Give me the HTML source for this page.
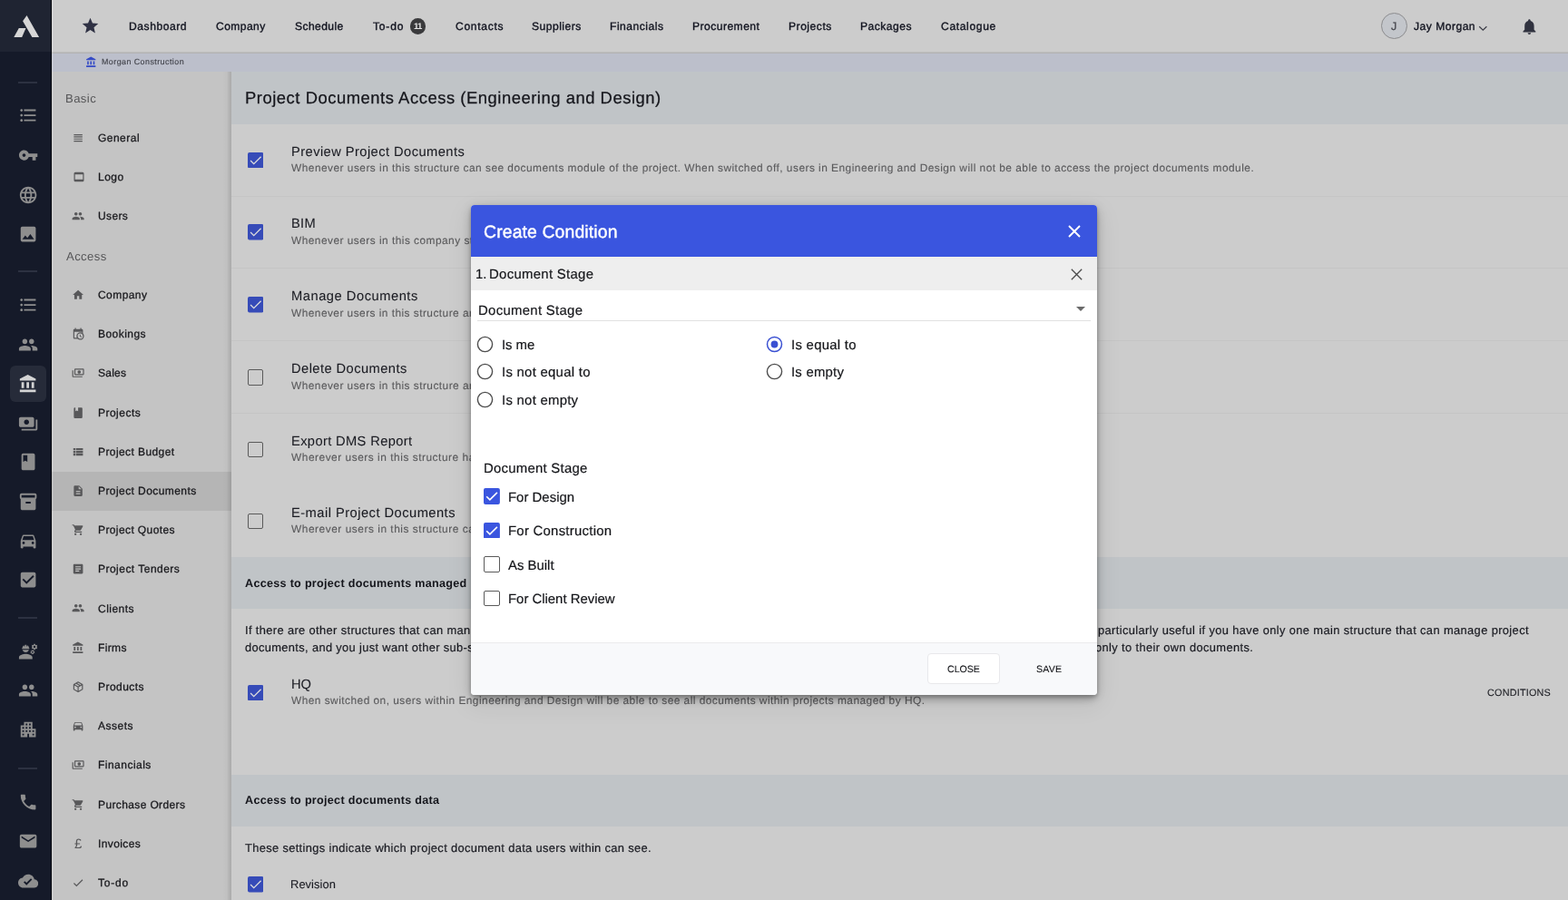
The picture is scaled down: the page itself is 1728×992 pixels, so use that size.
<!DOCTYPE html>
<html lang="en">
<head>
<meta charset="utf-8">
<title>Project Documents Access - Create Condition</title>
<style>
*{margin:0;padding:0}
html,body{width:1728px;height:992px;overflow:hidden;background:#cccccc;font-family:"Liberation Sans", sans-serif}
#app{position:absolute;left:0;top:0;width:1728px;height:992px;overflow:hidden}
.g{position:absolute;left:0;top:0;width:0;height:0}
.b,.ic,.t{position:absolute;display:block}
.t{will-change:transform;text-rendering:geometricPrecision;white-space:nowrap;line-height:20px;font-weight:400;font-style:normal;text-decoration:none}
</style>
</head>
<body>
<div id="app">
<aside class="g rail">
<div class="b" style="left:0px;top:0px;width:57px;height:992px;background:#151a29"></div>
<div class="b" style="left:0px;top:0px;width:56px;height:57px;background:#1f2432"></div>
<div class="b" style="left:56px;top:0px;width:1px;height:992px;background:#04060c"></div>
<svg class="ic" style="left:0;top:0;width:57px;height:57px" viewBox="0 0 57 57"><path fill="#d6d6d6" d="M29.5 17 L43.1 41 H35.4 L25.1 23.3 Z M20.8 30.9 H28.5 L24.2 41 H15.3 Z"/></svg>
<div class="b" style="left:11px;top:403px;width:40px;height:40px;background:#262b39;border-radius:6px"></div>
<svg class="ic" style="left:19.90px;top:116.40px;width:22.2px;height:22.2px" viewBox="0 0 24 24" aria-hidden="true"><path fill="#8e8e8e" d="M4 10.5c-.83 0-1.5.67-1.5 1.5s.67 1.5 1.5 1.5 1.5-.67 1.5-1.5-.67-1.5-1.5-1.5zm0-6c-.83 0-1.5.67-1.5 1.5S3.17 7.5 4 7.5 5.5 6.83 5.5 6 4.83 4.500 4 4.500zm0 12c-.83 0-1.5.68-1.5 1.5s.68 1.5 1.5 1.5 1.5-.68 1.5-1.5-.67-1.5-1.5-1.5zM7 19h14v-2H7v2zm0-6h14v-2H7v2zm0-8v2h14V5H7z"/></svg>
<svg class="ic" style="left:19.90px;top:159.90px;width:22.2px;height:22.2px" viewBox="0 0 24 24" aria-hidden="true"><path fill="#8e8e8e" d="M12.65 10C11.83 7.67 9.61 6 7 6c-3.31 0-6 2.69-6 6s2.69 6 6 6c2.61 0 4.83-1.67 5.65-4H17v4h4v-4h2v-4H12.65zM7 14c-1.1 0-2-.9-2-2s.9-2 2-2 2 .9 2 2-.9 2-2 2z"/></svg>
<svg class="ic" style="left:19.90px;top:203.50px;width:22.2px;height:22.2px" viewBox="0 0 24 24" aria-hidden="true"><path fill="#8e8e8e" d="M11.99 2C6.47 2 2 6.48 2 12s4.47 10 9.99 10C17.52 22 22 17.52 22 12S17.52 2 11.99 2zm6.93 6h-2.95c-.32-1.25-.78-2.45-1.38-3.56 1.84.63 3.37 1.91 4.33 3.56zM12 4.040c.83 1.2 1.48 2.53 1.91 3.96h-3.82c.43-1.43 1.08-2.76 1.91-3.96zM4.260 14C4.100 13.360 4 12.690 4 12s.1-1.36.26-2h3.380c-.08.66-.14 1.32-.14 2 0 .68.06 1.340.14 2H4.260zm.82 2h2.950c.32 1.250.78 2.450 1.380 3.560-1.840-.630-3.370-1.900-4.330-3.560zm2.950-8H5.080c.96-1.660 2.490-2.930 4.330-3.560C8.810 5.550 8.350 6.750 8.030 8zM12 19.960c-.83-1.200-1.480-2.530-1.910-3.960h3.820c-.43 1.430-1.080 2.760-1.910 3.960zM14.340 14H9.660c-.09-.66-.16-1.320-.16-2 0-.68.07-1.350.16-2h4.680c.09.65.16 1.320.16 2 0 .68-.07 1.340-.16 2zm.25 5.560c.6-1.110 1.060-2.310 1.380-3.560h2.950c-.96 1.650-2.490 2.930-4.330 3.560zM16.360 14c.08-.66.14-1.320.14-2 0-.68-.06-1.340-.14-2h3.380c.16.64.26 1.310.26 2s-.1 1.360-.26 2h-3.380z"/></svg>
<svg class="ic" style="left:19.90px;top:246.50px;width:22.2px;height:22.2px" viewBox="0 0 24 24" aria-hidden="true"><path fill="#8e8e8e" d="M21 19V5c0-1.100-.9-2-2-2H5c-1.100 0-2 .9-2 2v14c0 1.100.9 2 2 2h14c1.100 0 2-.9 2-2zM8.500 13.500l2.500 3.010L14.500 12l4.500 6H5l3.500-4.500z"/></svg>
<svg class="ic" style="left:19.90px;top:325.10px;width:22.2px;height:22.2px" viewBox="0 0 24 24" aria-hidden="true"><path fill="#8e8e8e" d="M4 10.5c-.83 0-1.5.67-1.5 1.5s.67 1.5 1.5 1.5 1.5-.67 1.5-1.5-.67-1.5-1.5-1.5zm0-6c-.83 0-1.5.67-1.5 1.5S3.17 7.5 4 7.5 5.5 6.83 5.5 6 4.83 4.500 4 4.500zm0 12c-.83 0-1.5.68-1.5 1.5s.68 1.5 1.5 1.5 1.5-.68 1.5-1.5-.67-1.5-1.5-1.5zM7 19h14v-2H7v2zm0-6h14v-2H7v2zm0-8v2h14V5H7z"/></svg>
<svg class="ic" style="left:19.90px;top:368.90px;width:22.2px;height:22.2px" viewBox="0 0 24 24" aria-hidden="true"><path fill="#8e8e8e" d="M16 11c1.660 0 2.990-1.340 2.990-3S17.660 5 16 5c-1.660 0-3 1.340-3 3s1.340 3 3 3zm-8 0c1.660 0 2.990-1.340 2.990-3S9.660 5 8 5C6.340 5 5 6.340 5 8s1.340 3 3 3zm0 2c-2.330 0-7 1.170-7 3.500V19h14v-2.500c0-2.330-4.670-3.500-7-3.500zm8 0c-.29 0-.62.02-.97.05 1.160.84 1.970 1.970 1.970 3.450V19h6v-2.500c0-2.330-4.670-3.500-7-3.500z"/></svg>
<svg class="ic" style="left:19.90px;top:412.10px;width:22.2px;height:22.2px" viewBox="0 0 24 24" aria-hidden="true"><path fill="#d4d4d4" d="M4 10v7h3v-7H4zm6 0v7h3v-7h-3zM2 22h19v-3H2v3zm14-12v7h3v-7h-3zm-4.500-9L2 6v2h19V6l-9.500-5z"/></svg>
<svg class="ic" style="left:19.90px;top:455.90px;width:22.2px;height:22.2px" viewBox="0 0 24 24" aria-hidden="true"><path fill="#8e8e8e" d="M19 14V6c0-1.100-.9-2-2-2H3c-1.100 0-2 .9-2 2v8c0 1.100.9 2 2 2h14c1.100 0 2-.9 2-2zm-9-1c-1.660 0-3-1.340-3-3s1.340-3 3-3 3 1.340 3 3-1.340 3-3 3zm13-6v11c0 1.100-.9 2-2 2H4v-2h17V7h2z"/></svg>
<svg class="ic" style="left:19.90px;top:498.30px;width:22.2px;height:22.2px" viewBox="0 0 24 24" aria-hidden="true"><path fill="#8e8e8e" d="M18 2H6c-1.100 0-2 .9-2 2v16c0 1.100.9 2 2 2h12c1.100 0 2-.9 2-2V4c0-1.100-.9-2-2-2zM6 4h5v8l-2.500-1.500L6 12V4z"/></svg>
<svg class="ic" style="left:19.90px;top:541.50px;width:22.2px;height:22.2px" viewBox="0 0 24 24" aria-hidden="true"><path fill="#8e8e8e" d="M20 2H4c-1 0-2 .9-2 2v3.010c0 .72.43 1.340 1 1.690V20c0 1.100 1.100 2 2 2h14c.9 0 2-.9 2-2V8.700c.57-.35 1-.97 1-1.690V4c0-1.100-1-2-2-2zm-5 12H9v-2h6v2zm5-7H4V4h16v3z"/></svg>
<svg class="ic" style="left:19.90px;top:585.00px;width:22.2px;height:22.2px" viewBox="0 0 24 24" aria-hidden="true"><path fill="#8e8e8e" d="M18.920 6.010C18.720 5.420 18.160 5 17.500 5h-11c-.66 0-1.210.42-1.420 1.010L3 12v8c0 .55.45 1 1 1h1c.55 0 1-.45 1-1v-1h12v1c0 .55.45 1 1 1h1c.55 0 1-.45 1-1v-8l-2.080-5.990zM6.500 16c-.83 0-1.500-.67-1.500-1.500S5.670 13 6.500 13s1.500.67 1.500 1.500S7.330 16 6.500 16zm11 0c-.83 0-1.500-.67-1.500-1.500s.67-1.500 1.500-1.500 1.500.67 1.500 1.500-.67 1.500-1.500 1.500zM5 11l1.500-4.500h11L19 11H5z"/></svg>
<svg class="ic" style="left:19.90px;top:627.80px;width:22.2px;height:22.2px" viewBox="0 0 24 24" aria-hidden="true"><path fill="#8e8e8e" d="M19 3H5c-1.110 0-2 .9-2 2v14c0 1.100.89 2 2 2h14c1.110 0 2-.9 2-2V5c0-1.100-.89-2-2-2zm-9 14l-5-5 1.410-1.410L10 14.170l7.590-7.590L19 8l-9 9z"/></svg>
<svg class="ic" style="left:19.90px;top:706.90px;width:22.2px;height:22.2px" viewBox="0 0 24 24" aria-hidden="true"><path fill="#8e8e8e" d="M9 15c-2.670 0-8 1.340-8 4v2h16v-2c0-2.660-5.330-4-8-4zM22.100 6.840c.01-.11.02-.22.02-.34 0-.12-.01-.23-.03-.34l.74-.58c.07-.05.08-.15.04-.22l-.7-1.210c-.04-.08-.14-.1-.21-.08l-.86.35c-.18-.14-.38-.25-.59-.34l-.13-.93c-.02-.09-.09-.15-.18-.15h-1.400c-.09 0-.16.06-.17.15l-.13.93c-.21.09-.41.21-.59.34l-.87-.35c-.08-.03-.17 0-.21.08l-.7 1.210c-.04.08-.03.17.04.22l.74.58c-.02.11-.03.23-.03.34 0 .11.01.23.03.34l-.74.58c-.07.05-.08.15-.04.22l.7 1.210c.04.08.14.1.21.08l.87-.35c.18.14.38.25.59.34l.13.93c.01.09.08.15.17.15h1.400c.09 0 .16-.06.17-.15l.13-.93c.21-.09.41-.21.59-.34l.87.35c.08.03.17 0 .21-.08l.7-1.210c.04-.08.03-.17-.04-.22l-.73-.58zm-2.600.91c-.69 0-1.250-.56-1.250-1.250s.56-1.250 1.250-1.250 1.250.56 1.250 1.250-.56 1.250-1.250 1.250zM4.740 9h8.530c.27 0 .49-.22.49-.49v-.02c0-.27-.22-.49-.49-.49H13c0-1.480-.81-2.750-2-3.450v.95c0 .28-.22.5-.5.5s-.5-.22-.5-.5V4.140C9.680 4.060 9.350 4 9 4s-.68.06-1 .14V5.500c0 .28-.22.5-.5.5S7 5.780 7 5.500v-.95C5.810 5.250 5 6.520 5 8h-.26c-.27 0-.49.22-.49.49v.030c0 .26.22.48.49.48zM9 13c1.860 0 3.410-1.280 3.860-3H5.140c.45 1.720 2 3 3.860 3z"/><path fill="#8e8e8e" fill-rule="evenodd" d="M19.83 13.29 L19.48 14.15 L18.82 13.88 L18.38 14.32 L18.65 14.98 L17.79 15.33 L17.51 14.68 L16.89 14.68 L16.61 15.33 L15.75 14.98 L16.02 14.32 L15.58 13.88 L14.92 14.15 L14.57 13.29 L15.22 13.01 L15.22 12.39 L14.57 12.11 L14.92 11.25 L15.58 11.52 L16.02 11.08 L15.75 10.42 L16.61 10.07 L16.89 10.72 L17.51 10.72 L17.79 10.07 L18.65 10.42 L18.38 11.08 L18.82 11.52 L19.48 11.25 L19.83 12.11 L19.18 12.39 L19.18 13.01Z M16.25 12.70a0.95 0.95 0 1 0 1.9 0a0.95 0.95 0 1 0 -1.9 0Z"/></svg>
<svg class="ic" style="left:19.90px;top:750.10px;width:22.2px;height:22.2px" viewBox="0 0 24 24" aria-hidden="true"><path fill="#8e8e8e" d="M16 11c1.660 0 2.990-1.340 2.990-3S17.660 5 16 5c-1.660 0-3 1.340-3 3s1.340 3 3 3zm-8 0c1.660 0 2.990-1.340 2.990-3S9.660 5 8 5C6.340 5 5 6.340 5 8s1.340 3 3 3zm0 2c-2.330 0-7 1.170-7 3.500V19h14v-2.500c0-2.330-4.670-3.500-7-3.500zm8 0c-.29 0-.62.02-.97.05 1.160.84 1.970 1.970 1.970 3.450V19h6v-2.500c0-2.330-4.670-3.500-7-3.500z"/></svg>
<svg class="ic" style="left:19.90px;top:793.40px;width:22.2px;height:22.2px" viewBox="0 0 24 24" aria-hidden="true"><path fill="#8e8e8e" d="M17 11V3H7v4H3v14h8v-4h2v4h8V11h-4zM7 19H5v-2h2v2zm0-4H5v-2h2v2zm0-4H5V9h2v2zm4 4H9v-2h2v2zm0-4H9V9h2v2zm0-4H9V5h2v2zm4 8h-2v-2h2v2zm0-4h-2V9h2v2zm0-4h-2V5h2v2zm4 12h-2v-2h2v2zm0-4h-2v-2h2v2z"/></svg>
<svg class="ic" style="left:19.90px;top:872.90px;width:22.2px;height:22.2px" viewBox="0 0 24 24" aria-hidden="true"><path fill="#8e8e8e" d="M6.620 10.790c1.440 2.830 3.760 5.140 6.590 6.590l2.200-2.200c.27-.27.67-.36 1.020-.24 1.120.37 2.330.57 3.570.57.55 0 1 .45 1 1V20c0 .55-.45 1-1 1-9.390 0-17-7.610-17-17 0-.55.45-1 1-1h3.500c.55 0 1 .45 1 1 0 1.250.2 2.450.57 3.570.11.35.03.74-.25 1.020l-2.200 2.200z"/></svg>
<svg class="ic" style="left:19.90px;top:915.80px;width:22.2px;height:22.2px" viewBox="0 0 24 24" aria-hidden="true"><path fill="#8e8e8e" d="M20 4H4c-1.100 0-1.990.9-1.990 2L2 18c0 1.100.9 2 2 2h16c1.100 0 2-.9 2-2V6c0-1.100-.9-2-2-2zm0 4l-8 5-8-5V6l8 5 8-5v2z"/></svg>
<svg class="ic" style="left:19.90px;top:959.50px;width:22.2px;height:22.2px" viewBox="0 0 24 24" aria-hidden="true"><path fill="#8e8e8e" d="M19.350 10.040C18.670 6.590 15.640 4 12 4 9.110 4 6.600 5.640 5.350 8.040 2.340 8.360 0 10.910 0 14c0 3.310 2.690 6 6 6h13c2.760 0 5-2.240 5-5 0-2.640-2.050-4.780-4.650-4.960zM10 17l-3.500-3.500 1.410-1.410L10 14.170 15.180 9l1.410 1.410L10 17z"/></svg>
<div class="b" style="left:20px;top:90px;width:21px;height:2px;background:#2c3141"></div>
<div class="b" style="left:20px;top:298px;width:21px;height:2px;background:#2c3141"></div>
<div class="b" style="left:20px;top:680px;width:21px;height:2px;background:#2c3141"></div>
<div class="b" style="left:20px;top:846px;width:21px;height:2px;background:#2c3141"></div>
</aside>
<header class="g topnav">
<div class="b" style="left:57px;top:0px;width:1671px;height:58px;background:#cccccc"></div>
<div class="b" style="left:57px;top:57px;width:1671px;height:1px;background:#bdbdbd"></div>
<div class="b" style="left:57px;top:58px;width:1671px;height:1px;background:#b3b3b3"></div>
<svg class="ic" style="left:89.10px;top:18.40px;width:21px;height:21px" viewBox="0 0 24 24" aria-hidden="true"><path fill="#2f3144" d="M12 17.270L18.180 21l-1.640-7.030L22 9.240l-7.190-.61L12 2 9.190 8.630 2 9.240l5.460 4.730L5.820 21z"/></svg>
<nav>
<a class="t" style="left:141.75px;top:19px;font-size:12.1px;color:#11131f;letter-spacing:0.554px;-webkit-text-stroke:0.35px #11131f">Dashboard</a>
<a class="t" style="left:237.68px;top:19px;font-size:12.1px;color:#11131f;letter-spacing:0.422px;-webkit-text-stroke:0.35px #11131f">Company</a>
<a class="t" style="left:324.87px;top:19px;font-size:12.1px;color:#11131f;letter-spacing:0.416px;-webkit-text-stroke:0.35px #11131f">Schedule</a>
<a class="t" style="left:410.81px;top:19px;font-size:12.1px;color:#11131f;letter-spacing:0.790px;-webkit-text-stroke:0.35px #11131f">To-do</a>
<a class="t" style="left:501.68px;top:19px;font-size:12.1px;color:#11131f;letter-spacing:0.706px;-webkit-text-stroke:0.35px #11131f">Contacts</a>
<a class="t" style="left:586.37px;top:19px;font-size:12.1px;color:#11131f;letter-spacing:0.477px;-webkit-text-stroke:0.35px #11131f">Suppliers</a>
<a class="t" style="left:672.30px;top:19px;font-size:12.1px;color:#11131f;letter-spacing:0.511px;-webkit-text-stroke:0.35px #11131f">Financials</a>
<a class="t" style="left:763.05px;top:19px;font-size:12.1px;color:#11131f;letter-spacing:0.464px;-webkit-text-stroke:0.35px #11131f">Procurement</a>
<a class="t" style="left:868.80px;top:19px;font-size:12.1px;color:#11131f;letter-spacing:0.516px;-webkit-text-stroke:0.35px #11131f">Projects</a>
<a class="t" style="left:948.05px;top:19px;font-size:12.1px;color:#11131f;letter-spacing:0.491px;-webkit-text-stroke:0.35px #11131f">Packages</a>
<a class="t" style="left:1036.68px;top:19px;font-size:12.1px;color:#11131f;letter-spacing:0.643px;-webkit-text-stroke:0.35px #11131f">Catalogue</a>
<div class="b" style="left:451.5px;top:20px;width:17.6px;height:17.6px;background:#3a3a3c;border-radius:50%"></div>
<span class="t" style="left:455.70px;top:20px;font-size:9.6px;color:#e4e4e4;letter-spacing:-0.909px;font-weight:700">11</span>
</nav>
<div class="b" style="left:1521.8px;top:14.2px;width:29px;height:29px;background:#c3c6cb;border:1px solid #8c8c8e;border-radius:50%;box-sizing:border-box"></div>
<span class="t" style="left:1533.11px;top:19px;font-size:12.4px;color:#4a4b52;-webkit-text-stroke:0.3px #4a4b52">J</span>
<span class="t" style="left:1558.06px;top:19px;font-size:12.1px;color:#11131f;letter-spacing:0.489px;-webkit-text-stroke:0.35px #11131f">Jay Morgan</span>
<svg class="ic" style="left:1628.8px;top:27.7px;width:11px;height:7px" viewBox="0 0 11 7"><path d="M1.2 1.2 L5.3 5.2 L9.4 1.2" fill="none" stroke="#3a3c46" stroke-width="1.2"/></svg>
<svg class="ic" style="left:1675.40px;top:18.60px;width:20.8px;height:20.8px" viewBox="0 0 24 24" aria-hidden="true"><path fill="#30323f" d="M12 22c1.100 0 2-.9 2-2h-4c0 1.100.89 2 2 2zm6-6v-5c0-3.070-1.640-5.640-4.500-6.320V4c0-.83-.67-1.500-1.500-1.500s-1.500.67-1.500 1.500v.68C7.630 5.360 6 7.920 6 11v5l-2 2v1h16v-1l-2-2z"/></svg>
</header>
<div class="g crumb">
<div class="b" style="left:57px;top:59px;width:1671px;height:20px;background:#bcbfcb"></div>
<svg class="ic" style="left:94.30px;top:61.60px;width:13.0px;height:13.0px" viewBox="0 0 24 24" aria-hidden="true"><path fill="#344ac6" d="M4 10v7h3v-7H4zm6 0v7h3v-7h-3zM2 22h19v-3H2v3zm14-12v7h3v-7h-3zm-4.500-9L2 6v2h19V6l-9.500-5z"/></svg>
<span class="t" style="left:111.70px;top:58px;font-size:8.9px;color:#43444c;letter-spacing:0.455px;-webkit-text-stroke:0.15px #43444c">Morgan Construction</span>
</div>
<nav class="g side">
<div class="b" style="left:57px;top:79px;width:198px;height:913px;background:#c4c4c4"></div>
<div class="b" style="left:57px;top:520px;width:198px;height:43px;background:#b5b5b5"></div>
<span class="t" style="left:71.98px;top:99px;font-size:13.1px;color:#555557;letter-spacing:0.424px">Basic</span>
<span class="t" style="left:72.50px;top:273px;font-size:13.1px;color:#555557;letter-spacing:0.397px">Access</span>
<svg class="ic" style="left:79.40px;top:144.90px;width:14.2px;height:14.2px" viewBox="0 0 24 24" aria-hidden="true"><path fill="#58585a" d="M4 15h16v-2H4v2zm0 4h16v-2H4v2zm0-8h16V9H4v2zm0-6v2h16V5H4z"/></svg>
<a class="t" style="left:108.04px;top:142px;font-size:12.0px;color:#19191d;letter-spacing:0.477px;-webkit-text-stroke:0.3px #19191d">General</a>
<svg class="ic" style="left:80.5px;top:189.2px;width:12px;height:12px" viewBox="0 0 12 12"><path fill="#58585a" fill-rule="evenodd" d="M2 .7h8a1.5 1.5 0 0 1 1.5 1.5v7.6a1.500 1.500 0 0 1-1.500 1.500h-8a1.500 1.500 0 0 1-1.500-1.500v-7.600a1.500 1.500 0 0 1 1.500-1.500zM1.700 3.300v5.400h8.600v-5.400z"/></svg>
<a class="t" style="left:107.66px;top:185px;font-size:12.0px;color:#19191d;letter-spacing:0.510px;-webkit-text-stroke:0.3px #19191d">Logo</a>
<svg class="ic" style="left:79.40px;top:230.80px;width:14.2px;height:14.2px" viewBox="0 0 24 24" aria-hidden="true"><path fill="#58585a" d="M16 11c1.660 0 2.990-1.340 2.990-3S17.660 5 16 5c-1.660 0-3 1.340-3 3s1.340 3 3 3zm-8 0c1.660 0 2.990-1.340 2.990-3S9.660 5 8 5C6.340 5 5 6.340 5 8s1.340 3 3 3zm0 2c-2.330 0-7 1.170-7 3.500V19h14v-2.500c0-2.330-4.670-3.500-7-3.500zm8 0c-.29 0-.62.02-.97.05 1.160.84 1.970 1.970 1.970 3.450V19h6v-2.500c0-2.330-4.670-3.500-7-3.500z"/></svg>
<a class="t" style="left:107.85px;top:228px;font-size:12.0px;color:#19191d;letter-spacing:0.372px;-webkit-text-stroke:0.3px #19191d">Users</a>
<svg class="ic" style="left:79.40px;top:317.90px;width:14.2px;height:14.2px" viewBox="0 0 24 24" aria-hidden="true"><path fill="#58585a" d="M10 20v-6h4v6h5v-8h3L12 3 2 12h3v8z"/></svg>
<a class="t" style="left:108.04px;top:315px;font-size:12.0px;color:#19191d;letter-spacing:0.434px;-webkit-text-stroke:0.3px #19191d">Company</a>
<svg class="ic" style="left:79.40px;top:361.10px;width:14.2px;height:14.2px" viewBox="0 0 24 24" aria-hidden="true"><path fill="#58585a" d="M15 13h1.500v2.820l2.440 1.410-.75 1.300L15 16.690V13m4-5H5v11h4.670c-.43-.91-.67-1.930-.67-3a7 7 0 0 1 7-7c1.070 0 2.090.24 3 .67V8M5 21a2 2 0 0 1-2-2V5c0-1.110.89-2 2-2h1V1h2v2h8V1h2v2h1a2 2 0 0 1 2 2v6.100c1.240 1.260 2 2.990 2 4.900a7 7 0 0 1-7 7c-1.910 0-3.640-.76-4.900-2H5m11-9.850A4.850 4.850 0 0 0 11.150 16c0 2.680 2.170 4.850 4.850 4.850A4.850 4.850 0 0 0 20.850 16c0-2.680-2.170-4.850-4.850-4.850z"/></svg>
<a class="t" style="left:107.66px;top:358px;font-size:12.0px;color:#19191d;letter-spacing:0.464px;-webkit-text-stroke:0.3px #19191d">Bookings</a>
<svg class="ic" style="left:79.40px;top:404.30px;width:14.2px;height:14.2px" viewBox="0 0 24 24" aria-hidden="true"><path fill="#58585a" transform="translate(24 0) scale(-1 1)" d="M19 14V6c0-1.100-.9-2-2-2H3c-1.100 0-2 .9-2 2v8c0 1.100.9 2 2 2h14c1.100 0 2-.9 2-2zm-2 0H3V6h14v8zm-7-7c-1.660 0-3 1.340-3 3s1.340 3 3 3 3-1.340 3-3-1.340-3-3-3zm13 0v11c0 1.100-.9 2-2 2H4v-2h17V7h2z"/></svg>
<a class="t" style="left:108.22px;top:401px;font-size:12.0px;color:#19191d;letter-spacing:0.258px;-webkit-text-stroke:0.3px #19191d">Sales</a>
<svg class="ic" style="left:79.40px;top:447.50px;width:14.2px;height:14.2px" viewBox="0 0 24 24" aria-hidden="true"><path fill="#58585a" d="M18 22a2 2 0 0 0 2-2V4c0-1.110-.9-2-2-2h-6v7L9.500 7.500 7 9V2H6a2 2 0 0 0-2 2v16a2 2 0 0 0 2 2h12z"/></svg>
<a class="t" style="left:107.66px;top:445px;font-size:12.0px;color:#19191d;letter-spacing:0.481px;-webkit-text-stroke:0.3px #19191d">Projects</a>
<svg class="ic" style="left:79.40px;top:490.70px;width:14.2px;height:14.2px" viewBox="0 0 24 24" aria-hidden="true"><path fill="#58585a" d="M3 14h4v-4H3v4zm0 5h4v-4H3v4zM3 9h4V5H3v4zm5 5h13v-4H8v4zm0 5h13v-4H8v4zM8 5v4h13V5H8z"/></svg>
<a class="t" style="left:107.66px;top:488px;font-size:12.0px;color:#19191d;letter-spacing:0.414px;-webkit-text-stroke:0.3px #19191d">Project Budget</a>
<svg class="ic" style="left:79.40px;top:533.90px;width:14.2px;height:14.2px" viewBox="0 0 24 24" aria-hidden="true"><path fill="#58585a" d="M14 2H6c-1.100 0-1.990.9-1.990 2L4 20c0 1.100.89 2 1.990 2H18c1.100 0 2-.9 2-2V8l-6-6zm2 16H8v-2h8v2zm0-4H8v-2h8v2zm-3-5V3.500L18.500 9H13z"/></svg>
<a class="t" style="left:107.66px;top:531px;font-size:12.0px;color:#19191d;letter-spacing:0.427px;-webkit-text-stroke:0.3px #19191d">Project Documents</a>
<svg class="ic" style="left:79.40px;top:577.10px;width:14.2px;height:14.2px" viewBox="0 0 24 24" aria-hidden="true"><path fill="#58585a" d="M7 18c-1.100 0-1.990.9-1.990 2S5.900 22 7 22s2-.9 2-2-.9-2-2-2zM1 2v2h2l3.600 7.590-1.350 2.450c-.16.28-.25.61-.25.96 0 1.100.9 2 2 2h12v-2H7.420c-.14 0-.25-.11-.25-.25l.03-.12.9-1.630h7.450c.75 0 1.410-.41 1.750-1.030l3.580-6.490c.08-.14.12-.31.12-.48 0-.55-.45-1-1-1H5.210l-.94-2H1zm16 16c-1.100 0-1.990.9-1.990 2s.89 2 1.990 2 2-.9 2-2-.9-2-2-2z"/></svg>
<a class="t" style="left:107.66px;top:574px;font-size:12.0px;color:#19191d;letter-spacing:0.395px;-webkit-text-stroke:0.3px #19191d">Project Quotes</a>
<svg class="ic" style="left:79.40px;top:620.30px;width:14.2px;height:14.2px" viewBox="0 0 24 24" aria-hidden="true"><path fill="#58585a" d="M19 3H5c-1.100 0-2 .9-2 2v14c0 1.100.9 2 2 2h14c1.100 0 2-.9 2-2V5c0-1.100-.9-2-2-2zm-5 14H7v-2h7v2zm3-4H7v-2h10v2zm0-4H7V7h10v2z"/></svg>
<a class="t" style="left:107.66px;top:617px;font-size:12.0px;color:#19191d;letter-spacing:0.474px;-webkit-text-stroke:0.3px #19191d">Project Tenders</a>
<svg class="ic" style="left:79.40px;top:663.10px;width:14.2px;height:14.2px" viewBox="0 0 24 24" aria-hidden="true"><path fill="#58585a" d="M16 11c1.660 0 2.990-1.340 2.990-3S17.660 5 16 5c-1.660 0-3 1.340-3 3s1.340 3 3 3zm-8 0c1.660 0 2.990-1.340 2.990-3S9.660 5 8 5C6.340 5 5 6.340 5 8s1.340 3 3 3zm0 2c-2.330 0-7 1.170-7 3.500V19h14v-2.500c0-2.330-4.670-3.500-7-3.500zm8 0c-.29 0-.62.02-.97.05 1.160.84 1.970 1.970 1.970 3.450V19h6v-2.500c0-2.330-4.670-3.500-7-3.500z"/></svg>
<a class="t" style="left:108.04px;top:661px;font-size:12.0px;color:#19191d;letter-spacing:0.460px;-webkit-text-stroke:0.3px #19191d">Clients</a>
<svg class="ic" style="left:79.40px;top:706.70px;width:14.2px;height:14.2px" viewBox="0 0 24 24" aria-hidden="true"><path fill="#58585a" d="M4 10v7h3v-7H4zm6 0v7h3v-7h-3zM2 22h19v-3H2v3zm14-12v7h3v-7h-3zm-4.500-9L2 6v2h19V6l-9.500-5z"/></svg>
<a class="t" style="left:107.66px;top:704px;font-size:12.0px;color:#19191d;letter-spacing:0.356px;-webkit-text-stroke:0.3px #19191d">Firms</a>
<svg class="ic" style="left:79.40px;top:749.90px;width:14.2px;height:14.2px" viewBox="0 0 24 24" aria-hidden="true"><path fill="#58585a" d="M21 16.500c0 .38-.21.71-.53.88l-7.900 4.440c-.16.12-.36.18-.57.18-.21 0-.41-.06-.57-.18l-7.900-4.440A.991.991 0 0 1 3 16.500v-9c0-.38.21-.71.53-.88l7.900-4.440c.16-.12.36-.18.57-.18.21 0 .41.060.57.180l7.900 4.440c.32.17.53.5.53.88v9M12 4.150L10.110 5.220 16 8.610l1.960-1.110L12 4.150M6.040 7.500L12 10.850l1.960-1.100-5.880-3.400-2.040 1.150M5 15.910l6 3.380v-6.710L5 9.210v6.700m14 0v-6.700l-6 3.370v6.710l6-3.380z"/></svg>
<a class="t" style="left:107.66px;top:747px;font-size:12.0px;color:#19191d;letter-spacing:0.465px;-webkit-text-stroke:0.3px #19191d">Products</a>
<svg class="ic" style="left:79.40px;top:793.10px;width:14.2px;height:14.2px" viewBox="0 0 24 24" aria-hidden="true"><path fill="#58585a" d="M18.920 6.010C18.720 5.420 18.160 5 17.500 5h-11c-.66 0-1.210.42-1.420 1.010L3 12v8c0 .55.45 1 1 1h1c.55 0 1-.45 1-1v-1h12v1c0 .55.45 1 1 1h1c.55 0 1-.45 1-1v-8l-2.080-5.990zM6.500 16c-.83 0-1.500-.67-1.500-1.500S5.670 13 6.500 13s1.500.67 1.500 1.500S7.330 16 6.500 16zm11 0c-.83 0-1.500-.67-1.500-1.500s.67-1.500 1.500-1.500 1.500.67 1.500 1.500-.67 1.500-1.500 1.500zM5 11l1.500-4.500h11L19 11H5z"/></svg>
<a class="t" style="left:107.90px;top:790px;font-size:12.0px;color:#19191d;letter-spacing:0.493px;-webkit-text-stroke:0.3px #19191d">Assets</a>
<svg class="ic" style="left:79.40px;top:836.30px;width:14.2px;height:14.2px" viewBox="0 0 24 24" aria-hidden="true"><path fill="#58585a" transform="translate(24 0) scale(-1 1)" d="M19 14V6c0-1.100-.9-2-2-2H3c-1.100 0-2 .9-2 2v8c0 1.100.9 2 2 2h14c1.100 0 2-.9 2-2zm-2 0H3V6h14v8zm-7-7c-1.660 0-3 1.340-3 3s1.340 3 3 3 3-1.340 3-3-1.340-3-3-3zm13 0v11c0 1.100-.9 2-2 2H4v-2h17V7h2z"/></svg>
<a class="t" style="left:107.66px;top:833px;font-size:12.0px;color:#19191d;letter-spacing:0.477px;-webkit-text-stroke:0.3px #19191d">Financials</a>
<svg class="ic" style="left:79.40px;top:879.50px;width:14.2px;height:14.2px" viewBox="0 0 24 24" aria-hidden="true"><path fill="#58585a" d="M7 18c-1.100 0-1.990.9-1.990 2S5.900 22 7 22s2-.9 2-2-.9-2-2-2zM1 2v2h2l3.600 7.590-1.350 2.450c-.16.28-.25.61-.25.96 0 1.100.9 2 2 2h12v-2H7.420c-.14 0-.25-.11-.25-.25l.03-.12.9-1.630h7.450c.75 0 1.410-.41 1.750-1.030l3.580-6.490c.08-.14.12-.31.12-.48 0-.55-.45-1-1-1H5.210l-.94-2H1zm16 16c-1.100 0-1.990.9-1.990 2s.89 2 1.990 2 2-.9 2-2-.9-2-2-2z"/></svg>
<a class="t" style="left:107.66px;top:877px;font-size:12.0px;color:#19191d;letter-spacing:0.372px;-webkit-text-stroke:0.3px #19191d">Purchase Orders</a>
<span class="t" style="left:82.17px;top:921px;font-size:15px;color:#58585a">£</span>
<a class="t" style="left:107.66px;top:920px;font-size:12.0px;color:#19191d;letter-spacing:0.384px;-webkit-text-stroke:0.3px #19191d">Invoices</a>
<svg class="ic" style="left:79.40px;top:965.90px;width:14.2px;height:14.2px" viewBox="0 0 24 24" aria-hidden="true"><path fill="#58585a" d="M9 16.170L4.830 12l-1.420 1.410L9 19 21 7l-1.410-1.410z"/></svg>
<a class="t" style="left:108.41px;top:963px;font-size:12.0px;color:#19191d;letter-spacing:0.764px;-webkit-text-stroke:0.3px #19191d">To-do</a>
<div class="b" style="left:57px;top:0px;width:2px;height:992px;background:linear-gradient(to right,rgba(255,255,255,.2),rgba(255,255,255,.1));z-index:3"></div>
</nav>
<main class="g main">
<div class="b" style="left:245px;top:79px;width:10px;height:913px;background:linear-gradient(to right,rgba(0,0,0,0) 0%,rgba(0,0,0,.02) 50%,rgba(0,0,0,.08) 72%,rgba(0,0,0,.13) 100%)"></div>
<div class="b" style="left:255px;top:79px;width:1473px;height:913px;background:#cccccc"></div>
<div class="b" style="left:255px;top:79px;width:1473px;height:58px;background:#c0c4c7"></div>
<h1 class="t" style="left:270.26px;top:98px;font-size:18.4px;color:#15161c;letter-spacing:0.537px;-webkit-text-stroke:0.25px #15161c">Project Documents Access (Engineering and Design)</h1>
<section>
<svg class="ic" style="left:272.7px;top:167.75px;width:17.5px;height:17.5px" viewBox="0 0 18 18"><rect width="18" height="18" rx="2" fill="#364bb8"/><path d="M3.200 9.300 L6.900 13.000 L15.000 4.900" fill="none" stroke="#dcdcdc" stroke-width="1.34"/></svg>
<h3 class="t" style="left:320.55px;top:158px;font-size:14.7px;color:#1a1b22;letter-spacing:0.432px;-webkit-text-stroke:0.08px #1a1b22">Preview Project Documents</h3>
<p class="t" style="left:320.60px;top:175px;font-size:11.9px;color:#5a5a5c;letter-spacing:0.478px;-webkit-text-stroke:0.12px #5a5a5c">Whenever users in this structure can see documents module of the project. When switched off, users in Engineering and Design will not be able to access the project documents module.</p>
<div class="b" style="left:255px;top:216px;width:1473px;height:1px;background:#c5c5c5"></div>
</section>
<section>
<svg class="ic" style="left:272.7px;top:247.0px;width:17.5px;height:17.5px" viewBox="0 0 18 18"><rect width="18" height="18" rx="2" fill="#364bb8"/><path d="M3.200 9.300 L6.900 13.000 L15.000 4.900" fill="none" stroke="#dcdcdc" stroke-width="1.34"/></svg>
<h3 class="t" style="left:320.55px;top:237px;font-size:14.7px;color:#1a1b22;letter-spacing:0.252px;-webkit-text-stroke:0.08px #1a1b22">BIM</h3>
<p class="t" style="left:320.60px;top:255px;font-size:11.9px;color:#5a5a5c;letter-spacing:0.471px;-webkit-text-stroke:0.12px #5a5a5c">Whenever users in this company structure can see BIM models.</p>
<div class="b" style="left:255px;top:295px;width:1473px;height:1px;background:#c5c5c5"></div>
</section>
<section>
<svg class="ic" style="left:272.7px;top:327.0px;width:17.5px;height:17.5px" viewBox="0 0 18 18"><rect width="18" height="18" rx="2" fill="#364bb8"/><path d="M3.200 9.300 L6.900 13.000 L15.000 4.900" fill="none" stroke="#dcdcdc" stroke-width="1.34"/></svg>
<h3 class="t" style="left:320.55px;top:317px;font-size:14.7px;color:#1a1b22;letter-spacing:0.524px;-webkit-text-stroke:0.08px #1a1b22">Manage Documents</h3>
<p class="t" style="left:320.60px;top:335px;font-size:11.9px;color:#5a5a5c;letter-spacing:0.457px;-webkit-text-stroke:0.12px #5a5a5c">Whenever users in this structure are able to add and edit project documents.</p>
<div class="b" style="left:255px;top:375px;width:1473px;height:1px;background:#c5c5c5"></div>
</section>
<section>
<div class="b" style="left:272.7px;top:407.0px;width:17.5px;height:17.5px;border:1.4px solid #5a5a5a;border-radius:2px;box-sizing:border-box"></div>
<h3 class="t" style="left:320.55px;top:397px;font-size:14.7px;color:#1a1b22;letter-spacing:0.432px;-webkit-text-stroke:0.08px #1a1b22">Delete Documents</h3>
<p class="t" style="left:320.60px;top:415px;font-size:11.9px;color:#5a5a5c;letter-spacing:0.457px;-webkit-text-stroke:0.12px #5a5a5c">Whenever users in this structure are able to delete project documents.</p>
<div class="b" style="left:255px;top:455px;width:1473px;height:1px;background:#c5c5c5"></div>
</section>
<section>
<div class="b" style="left:272.7px;top:486.5px;width:17.5px;height:17.5px;border:1.4px solid #5a5a5a;border-radius:2px;box-sizing:border-box"></div>
<h3 class="t" style="left:320.55px;top:477px;font-size:14.7px;color:#1a1b22;letter-spacing:0.357px;-webkit-text-stroke:0.08px #1a1b22">Export DMS Report</h3>
<p class="t" style="left:320.60px;top:494px;font-size:11.9px;color:#5a5a5c;letter-spacing:0.526px;-webkit-text-stroke:0.12px #5a5a5c">Wherever users in this structure have access to export the DMS report.</p>
</section>
<section>
<div class="b" style="left:272.7px;top:565.75px;width:17.5px;height:17.5px;border:1.4px solid #5a5a5a;border-radius:2px;box-sizing:border-box"></div>
<h3 class="t" style="left:320.55px;top:556px;font-size:14.7px;color:#1a1b22;letter-spacing:0.467px;-webkit-text-stroke:0.08px #1a1b22">E-mail Project Documents</h3>
<p class="t" style="left:320.60px;top:573px;font-size:11.9px;color:#5a5a5c;letter-spacing:0.532px;-webkit-text-stroke:0.12px #5a5a5c">Wherever users in this structure can send project documents by e-mail.</p>
</section>
<div class="b" style="left:255px;top:614px;width:1473px;height:57px;background:#c0c4c7"></div>
<h2 class="t" style="left:270.30px;top:633px;font-size:12.6px;color:#15161c;letter-spacing:0.289px;font-weight:700">Access to project documents managed by other structures</h2>
<p>
<span class="t" style="left:269.79px;top:685px;font-size:12.9px;color:#1a1b22;letter-spacing:0.356px;-webkit-text-stroke:0.2px #1a1b22">If there are other structures that can manage project documents, you can give users of this structure access to them. This is</span>
<span class="t" style="left:1210.39px;top:685px;font-size:12.9px;color:#1a1b22;letter-spacing:0.370px;-webkit-text-stroke:0.2px #1a1b22">particularly useful if you have only one main structure that can manage project</span>
<span class="t" style="left:270.10px;top:704px;font-size:12.9px;color:#1a1b22;letter-spacing:0.335px;-webkit-text-stroke:0.2px #1a1b22">documents, and you just want other sub-structures to be able to manage documents and have access</span>
<span class="t" style="left:1207.20px;top:704px;font-size:12.9px;color:#1a1b22;letter-spacing:0.362px;-webkit-text-stroke:0.2px #1a1b22">only to their own documents.</span>
</p>
<svg class="ic" style="left:272.7px;top:754.7px;width:17.5px;height:17.5px" viewBox="0 0 18 18"><rect width="18" height="18" rx="2" fill="#364bb8"/><path d="M3.200 9.300 L6.900 13.000 L15.000 4.900" fill="none" stroke="#dcdcdc" stroke-width="1.34"/></svg>
<h3 class="t" style="left:320.55px;top:745px;font-size:14.7px;color:#1a1b22;letter-spacing:-0.213px;-webkit-text-stroke:0.08px #1a1b22">HQ</h3>
<p class="t" style="left:320.60px;top:762px;font-size:11.9px;color:#5a5a5c;letter-spacing:0.469px;-webkit-text-stroke:0.12px #5a5a5c">When switched on, users within Engineering and Design will be able to see all documents within projects managed by HQ.</p>
<span class="t" style="left:1639.09px;top:754px;font-size:10.8px;color:#1b1c22;letter-spacing:0.218px;-webkit-text-stroke:0.12px #1b1c22">CONDITIONS</span>
<div class="b" style="left:255px;top:854px;width:1473px;height:57px;background:#c0c4c7"></div>
<h2 class="t" style="left:270.30px;top:872px;font-size:12.6px;color:#15161c;letter-spacing:0.289px;font-weight:700">Access to project documents data</h2>
<p class="t" style="left:270.30px;top:925px;font-size:12.9px;color:#1a1b22;letter-spacing:0.335px;-webkit-text-stroke:0.2px #1a1b22">These settings indicate which project document data users within can see.</p>
<svg class="ic" style="left:272.7px;top:966.0px;width:17.5px;height:17.5px" viewBox="0 0 18 18"><rect width="18" height="18" rx="2" fill="#364bb8"/><path d="M3.200 9.300 L6.900 13.000 L15.000 4.900" fill="none" stroke="#dcdcdc" stroke-width="1.34"/></svg>
<h3 class="t" style="left:320.39px;top:965px;font-size:12.9px;color:#1a1b22;letter-spacing:0.066px;-webkit-text-stroke:0.1px #1a1b22">Revision</h3>
</main>
<div class="g dialog" role="dialog">
<div class="b" style="left:518.5px;top:226px;width:690.8px;height:539.6px;background:#fff;border-radius:4px;box-shadow:0 2px 4px rgba(0,0,0,.24),0 6px 8px -2px rgba(0,0,0,.16),0 3px 13px 1px rgba(0,0,0,.16),0 8px 28px 2px rgba(0,0,0,.08)"></div>
<div class="b" style="left:518.5px;top:226px;width:690.8px;height:57px;background:#3a55df;border-radius:4px 4px 0 0"></div>
<h2 class="t" style="left:532.89px;top:246px;font-size:19.4px;color:#ffffff;letter-spacing:0.128px;-webkit-text-stroke:0.4px #ffffff">Create Condition</h2>
<svg class="ic" style="left:1177.4px;top:248.4px;width:14px;height:14px" viewBox="0 0 14 14"><path d="M1 1 L13 13 M13 1 L1 13" stroke="#fff" stroke-width="1.9" fill="none"/></svg>
<div class="b" style="left:518.5px;top:283px;width:690.8px;height:37px;background:#eeeeee"></div>
<span class="t" style="left:524.47px;top:293px;font-size:14.9px;color:#15161a;-webkit-text-stroke:0.2px #15161a">1.</span>
<span class="t" style="left:538.84px;top:293px;font-size:14.9px;color:#15161a;letter-spacing:0.314px;-webkit-text-stroke:0.2px #15161a">Document Stage</span>
<svg class="ic" style="left:1179.7px;top:296.4px;width:13px;height:13px" viewBox="0 0 13 13"><path d="M0.8 0.8 L12.2 12.2 M12.2 0.8 L0.8 12.2" stroke="#4a4a4a" stroke-width="1.3" fill="none"/></svg>
<span class="t" style="left:527.04px;top:333px;font-size:14.9px;color:#15161a;letter-spacing:0.314px;-webkit-text-stroke:0.2px #15161a">Document Stage</span>
<svg class="ic" style="left:1186.2px;top:338.4px;width:10px;height:5px" viewBox="0 0 10 5"><path d="M0 0 H10 L5 5 Z" fill="#6a6a6a"/></svg>
<div class="b" style="left:526px;top:353px;width:676.3px;height:1px;background:#e1e1e1"></div>
<label>
<svg class="ic" style="left:525.0px;top:370.0px;width:19px;height:19px" viewBox="0 0 19 19"><circle cx="9.5" cy="9.5" r="8.1" fill="#fff" stroke="#4e4e4e" stroke-width="1.4"/></svg>
<span class="t" style="left:552.64px;top:371px;font-size:14.9px;color:#15161a;letter-spacing:-0.052px;-webkit-text-stroke:0.2px #15161a">Is me</span>
</label>
<label>
<svg class="ic" style="left:525.0px;top:400.25px;width:19px;height:19px" viewBox="0 0 19 19"><circle cx="9.5" cy="9.5" r="8.1" fill="#fff" stroke="#4e4e4e" stroke-width="1.4"/></svg>
<span class="t" style="left:552.64px;top:401px;font-size:14.9px;color:#15161a;letter-spacing:0.276px;-webkit-text-stroke:0.2px #15161a">Is not equal to</span>
</label>
<label>
<svg class="ic" style="left:525.0px;top:430.5px;width:19px;height:19px" viewBox="0 0 19 19"><circle cx="9.5" cy="9.5" r="8.1" fill="#fff" stroke="#4e4e4e" stroke-width="1.4"/></svg>
<span class="t" style="left:552.64px;top:432px;font-size:14.9px;color:#15161a;letter-spacing:0.269px;-webkit-text-stroke:0.2px #15161a">Is not empty</span>
</label>
<label>
<svg class="ic" style="left:843.9px;top:370.0px;width:19px;height:19px" viewBox="0 0 19 19"><circle cx="9.5" cy="9.5" r="8" fill="#fff" stroke="#3a50d2" stroke-width="1.5"/><circle cx="9.5" cy="9.5" r="3.9" fill="#3a50d2"/></svg>
<span class="t" style="left:871.54px;top:371px;font-size:14.9px;color:#15161a;letter-spacing:0.282px;-webkit-text-stroke:0.2px #15161a">Is equal to</span>
</label>
<label>
<svg class="ic" style="left:843.9px;top:400.1px;width:19px;height:19px" viewBox="0 0 19 19"><circle cx="9.5" cy="9.5" r="8.1" fill="#fff" stroke="#4e4e4e" stroke-width="1.4"/></svg>
<span class="t" style="left:871.54px;top:401px;font-size:14.9px;color:#15161a;letter-spacing:0.223px;-webkit-text-stroke:0.2px #15161a">Is empty</span>
</label>
<span class="t" style="left:533.04px;top:507px;font-size:14.9px;color:#15161a;letter-spacing:0.260px;-webkit-text-stroke:0.2px #15161a">Document Stage</span>
<label>
<svg class="ic" style="left:533.1px;top:538.0px;width:17.9px;height:17.9px" viewBox="0 0 18 18"><rect width="18" height="18" rx="2" fill="#3a55df"/><path d="M3.200 9.300 L6.900 13.000 L15.000 4.900" fill="none" stroke="#ffffff" stroke-width="1.61"/></svg>
<span class="t" style="left:560.04px;top:539px;font-size:14.9px;color:#15161a;letter-spacing:0.026px;-webkit-text-stroke:0.2px #15161a">For Design</span>
</label>
<label>
<svg class="ic" style="left:533.1px;top:575.5px;width:17.9px;height:17.9px" viewBox="0 0 18 18"><rect width="18" height="18" rx="2" fill="#3a55df"/><path d="M3.200 9.300 L6.900 13.000 L15.000 4.900" fill="none" stroke="#ffffff" stroke-width="1.61"/></svg>
<span class="t" style="left:560.04px;top:576px;font-size:14.9px;color:#15161a;letter-spacing:0.264px;-webkit-text-stroke:0.2px #15161a">For Construction</span>
</label>
<label>
<div class="b" style="left:533.1px;top:613.0px;width:17.9px;height:17.9px;border:1.4px solid #5a5a5a;border-radius:2px;box-sizing:border-box"></div>
<span class="t" style="left:560.20px;top:614px;font-size:14.9px;color:#15161a;letter-spacing:0.005px;-webkit-text-stroke:0.2px #15161a">As Built</span>
</label>
<label>
<div class="b" style="left:533.1px;top:650.5px;width:17.9px;height:17.9px;border:1.4px solid #5a5a5a;border-radius:2px;box-sizing:border-box"></div>
<span class="t" style="left:560.04px;top:651px;font-size:14.9px;color:#15161a;-webkit-text-stroke:0.2px #15161a">For Client Review</span>
</label>
<div class="b" style="left:518.5px;top:708px;width:690.8px;height:57.6px;background:#f8f9fb;border-top:1px solid #ebebec;border-radius:0 0 4px 4px;box-sizing:border-box"></div>
<div class="b btn" style="left:1022.3px;top:720.3px;width:79.3px;height:33.5px;background:#fff;border:1px solid #e8e8eb;border-radius:4px;box-sizing:border-box"></div>
<span class="t" style="left:1044.00px;top:728px;font-size:10.6px;color:#15161a;-webkit-text-stroke:0.12px #15161a">CLOSE</span>
<span class="t" style="left:1141.57px;top:728px;font-size:10.6px;color:#15161a;letter-spacing:0.228px;-webkit-text-stroke:0.12px #15161a">SAVE</span>
</div>
</div>
</body>
</html>
